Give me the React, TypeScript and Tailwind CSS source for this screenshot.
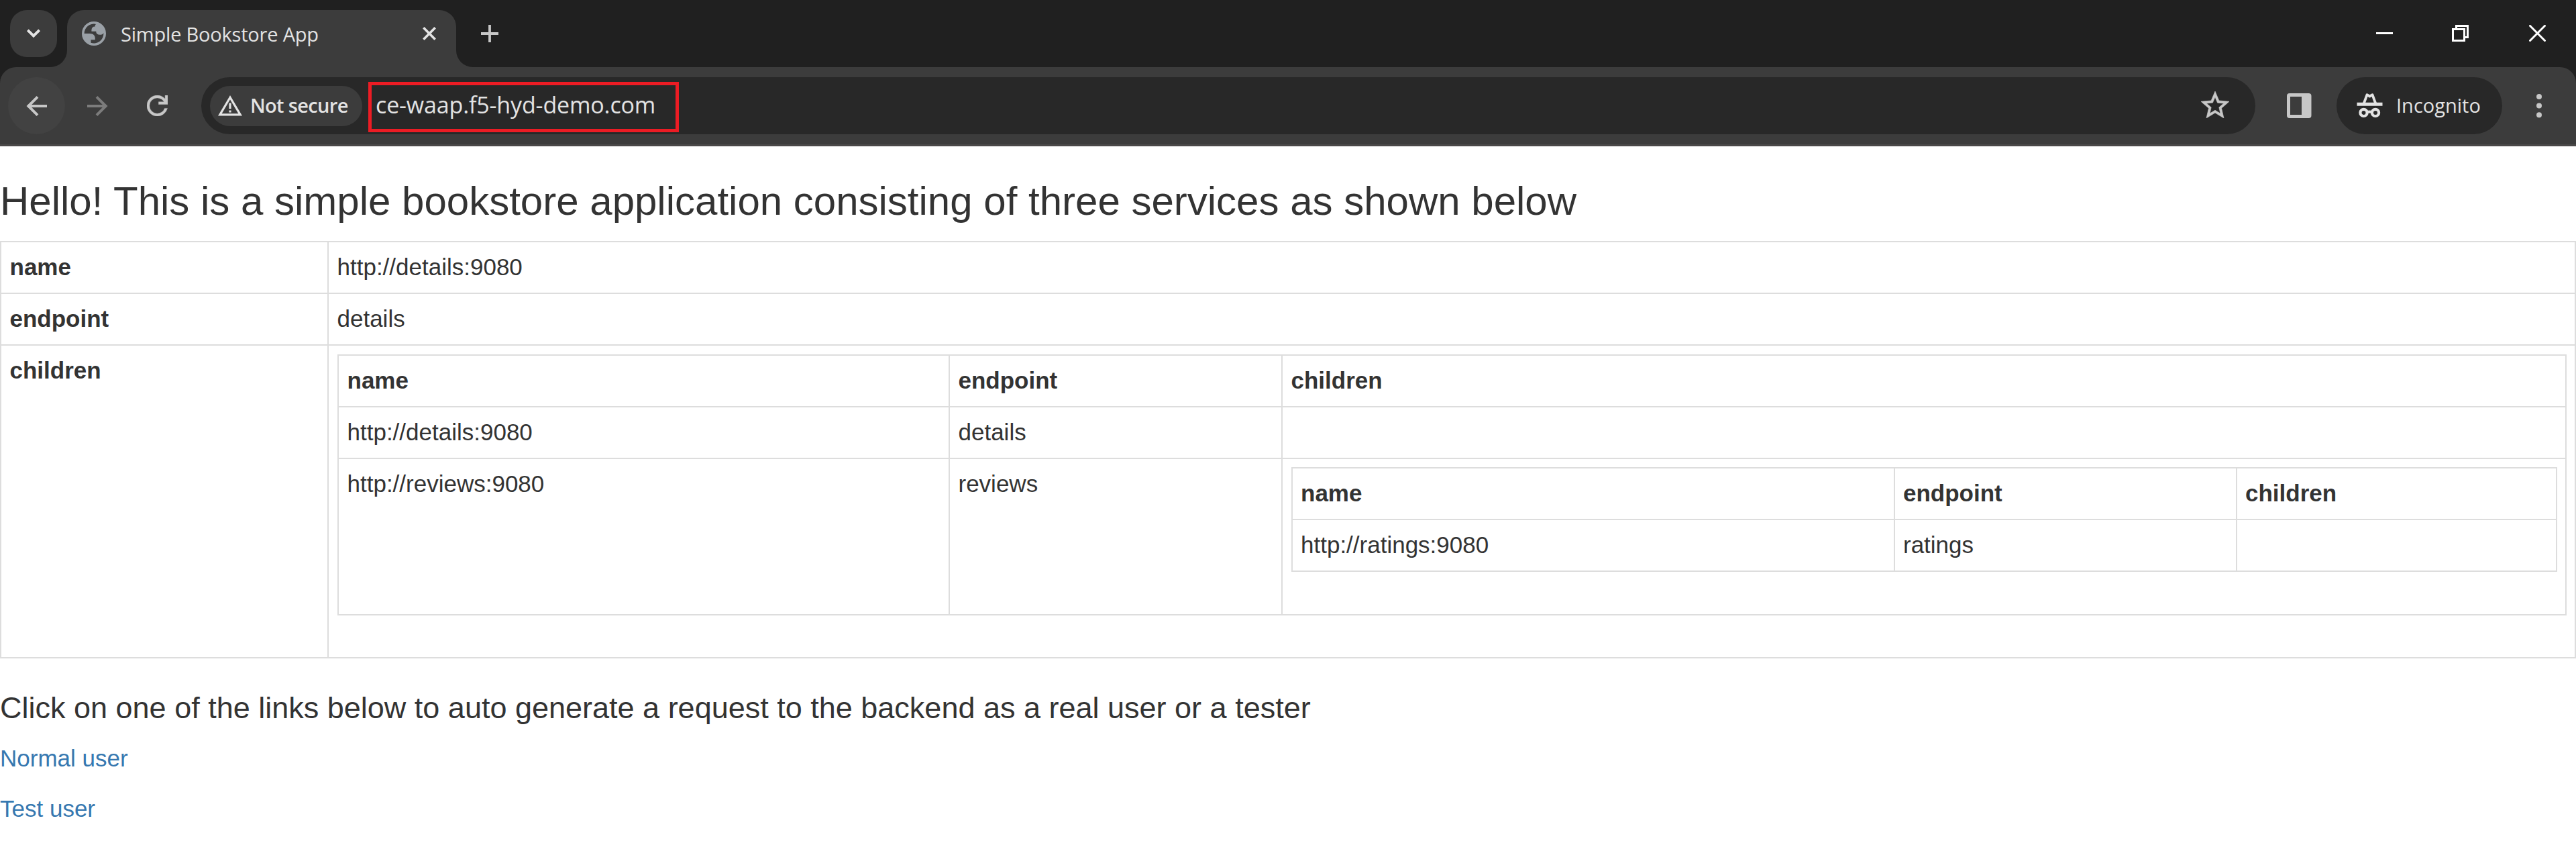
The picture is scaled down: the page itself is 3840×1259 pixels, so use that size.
import React from "react";

const th = "border-r-2 border-b-2 border-[#dddddd] pl-[12.5px] pt-[12px] align-top text-left font-bold";
const td = "border-r-2 border-b-2 border-[#dddddd] pl-[12.5px] pt-[12px] align-top text-left font-normal";
const table = "table-fixed border-separate border-spacing-0 border-l-2 border-t-2 border-[#dddddd]";

function RatingsTable() {
  return (
    <table className={`${table} w-[1887px]`}>
      <colgroup>
        <col className="w-[898px]" />
        <col className="w-[510px]" />
        <col />
      </colgroup>
      <tbody>
        <tr className="h-[77px]">
          <th className={th}>name</th>
          <th className={th}>endpoint</th>
          <th className={th}>children</th>
        </tr>
        <tr className="h-[77px]">
          <td className={td}>http://ratings:9080</td>
          <td className={td}>ratings</td>
          <td className={td}></td>
        </tr>
      </tbody>
    </table>
  );
}

function ServicesTable() {
  return (
    <table className={`${table} w-[3323px]`}>
      <colgroup>
        <col className="w-[911px]" />
        <col className="w-[496px]" />
        <col />
      </colgroup>
      <tbody>
        <tr className="h-[77px]">
          <th className={th}>name</th>
          <th className={th}>endpoint</th>
          <th className={th}>children</th>
        </tr>
        <tr className="h-[77px]">
          <td className={td}>http://details:9080</td>
          <td className={td}>details</td>
          <td className={td}></td>
        </tr>
        <tr className="h-[233px]">
          <td className={td}>http://reviews:9080</td>
          <td className={td}>reviews</td>
          <td className={td}>
            <RatingsTable />
          </td>
        </tr>
      </tbody>
    </table>
  );
}

function TabStrip() {
  return (
    <div className="flex h-[100px] items-start bg-[#202020] pl-[15px] pt-[15px]">
      <button className="flex size-[70px] items-center justify-center rounded-[25px] bg-[#3c3c3c]">
        <svg width="30" height="30" viewBox="0 0 30 30" fill="none" stroke="#e3e3e3" strokeWidth="4">
          <path d="M6.300 9.800 15 18.500l8.700-8.700" />
        </svg>
      </button>
      <div className="relative ml-[15px] flex h-[85px] w-[580px] items-start rounded-t-[25px] bg-[#3c3c3c]">
        <svg className="absolute bottom-0 -left-[25px]" width="25" height="25" viewBox="0 0 25 25">
          <path d="M25 0v25H0A25 25 0 0 0 25 0Z" fill="#3c3c3c" />
        </svg>
        <svg className="absolute -right-[25px] bottom-0" width="25" height="25" viewBox="0 0 25 25">
          <path d="M0 0v25h25A25 25 0 0 1 0 0Z" fill="#3c3c3c" />
        </svg>
        <svg className="ml-[22px] mt-[17px]" width="36" height="36" viewBox="2 2 20 20">
          <circle cx="12" cy="12" r="10" fill="#9aa0a6" />
          <path
            fill="#3c3c3c"
            d="M4 12h4.400c3.407.022 4.922 1.730 4.543 5.127H9.488v2.470a8.004 8.004 0 0 0 10.498-8.083C19.327 12.504 18.332 13 17 13c-2.137 0-3.206-.916-3.206-2.750h-3.748c-.274-2.728.683-4.092 2.870-4.092 0-.975.327-1.597.811-1.970A8.004 8.004 0 0 0 4 12z"
          />
        </svg>
        <span className="ml-[22px] mt-[16px] w-[400px] whitespace-nowrap text-[29px] leading-[40px] tracking-[-0.2px] text-[#e3e3e3] [font-family:'Open_Sans',sans-serif]">
          Simple Bookstore App
        </span>
        <svg className="ml-[50px] mt-[25px]" width="20" height="20" viewBox="0 0 20 20" stroke="#e3e3e3" strokeWidth="3.600">
          <path d="M1.300 1.300 18.700 18.700M18.700 1.300 1.300 18.700" />
        </svg>
      </div>
      <svg className="ml-[37px] mt-[22px]" width="26" height="26" viewBox="0 0 26 26" stroke="#c7c7c7" strokeWidth="3.800">
        <path d="M13 0v26M0 13h26" />
      </svg>
      <div className="ml-auto mr-[45px] mt-[22px] flex gap-[90px]">
        <svg width="25" height="25" viewBox="0 0 25 25" stroke="#fff" strokeWidth="3" className="-mr-[2px]">
          <path d="M0 12.500h25" />
        </svg>
        <svg width="25" height="25" viewBox="0 0 25 25" stroke="#fff" strokeWidth="3" fill="none">
          <path d="M1.500 6.500h17v17h-17ZM6.500 5V1.500h17v17H20" />
        </svg>
        <svg width="25" height="25" viewBox="0 0 25 25" stroke="#fff" strokeWidth="3">
          <path d="M.5.5l24 24M24.500.5l-24 24" />
        </svg>
      </div>
    </div>
  );
}

function Toolbar() {
  return (
    <div className="h-[118px] bg-[#202020]">
      <div className="flex h-[118px] items-start rounded-t-[24px] bg-[#3c3c3c] pt-[15px] shadow-[inset_0_-3px_0_#4a4848]">
        <div className="ml-[12px] flex size-[85px] items-center justify-center rounded-full bg-[#424242]">
          <svg width="32" height="32" viewBox="0 0 32 32" fill="none" stroke="#c7c7c7" strokeWidth="4">
            <path d="M31 16H3.500M17 2.300 3.300 16 17 29.700" />
          </svg>
        </div>
        <svg className="ml-[32px] mt-[27px]" width="32" height="32" viewBox="0 0 32 32" fill="none" stroke="#7c7c7c" strokeWidth="4">
          <path d="M1 16h27.500M15 2.300 28.700 16 15 29.700" />
        </svg>
        <svg className="ml-[58px] mt-[27px]" width="31" height="31" viewBox="160 -800 640 640" fill="#c7c7c7">
          <path
            stroke="#c7c7c7"
            strokeWidth="8"
            d="M480-160q-134 0-227-93t-93-227q0-134 93-227t227-93q69 0 132 28.500T720-690v-110h80v280H520v-80h168q-32-56-87.500-88T480-720q-100 0-170 70t-70 170q0 100 70 170t170 70q77 0 139-44t87-116h84q-28 106-114 173t-196 67Z"
          />
        </svg>

        <div className="ml-[50px] flex h-[85px] w-[3062px] items-center rounded-full bg-[#282828] pl-[13px]">
          <div className="flex h-[60px] w-[227px] items-center rounded-full bg-[#3c3c3c] pl-[12px]">
            <svg width="36" height="31" viewBox="0 0 36 31" fill="none" stroke="#e3e3e3" strokeWidth="3.200">
              <path d="M18 3.200 2.800 28.900h30.400Z" />
              <path d="M18 11.500v8.500M18 22.500v3" />
            </svg>
            <span className="mb-[2px] ml-[12px] whitespace-nowrap text-[29px] font-semibold leading-[40px] tracking-[-0.65px] text-[#e3e3e3] [font-family:'Open_Sans',sans-serif]">
              Not secure
            </span>
          </div>
          <div className="ml-[9px] mt-[4px] flex h-[75px] w-[463px] items-center border-[5px] border-[#ec1c24] pb-[7px] pl-[6px]">
            <span className="whitespace-nowrap text-[34px] leading-[46px] tracking-[-0.15px] text-[#e3e3e3] [font-family:'Open_Sans',sans-serif]">
              ce-waap.f5-hyd-demo.com
            </span>
          </div>
          <svg className="-mt-[3px] ml-auto mr-[39px]" width="42" height="40" viewBox="2 2 20 19" fill="#c7c7c7">
            <path
              stroke="#c7c7c7"
              strokeWidth=".3"
              d="M22 9.240l-7.190-.620L12 2 9.190 8.630 2 9.240l5.460 4.730L5.820 21 12 17.270 18.180 21l-1.630-7.030L22 9.240zM12 15.400l-3.760 2.270 1-4.280-3.320-2.880 4.380-.380L12 6.100l1.710 4.040 4.380.380-3.320 2.880 1 4.280L12 15.400z"
            />
          </svg>
        </div>

        <svg className="ml-[47px] mt-[24px]" width="37" height="37" viewBox="0 0 37 37">
          <rect width="36.500" height="37" rx="4" fill="#c7c7c7" />
          <path d="M5 5h17v27H5Z" fill="#3c3c3c" />
        </svg>
        <div className="ml-[37px] flex h-[85px] w-[247px] items-center rounded-full bg-[#282828] pl-[30px]">
          <svg width="39" height="37" viewBox="0 0 39 37" fill="none" stroke="#e3e3e3">
            <path d="M10.800 15 15.500 2.200l4 2.300 4-2.300L28.200 15" strokeWidth="3.800" strokeLinejoin="round" />
            <path d="M.5 16.200h38" strokeWidth="5" />
            <circle cx="10.500" cy="28.900" r="5.100" strokeWidth="4.200" />
            <circle cx="28" cy="28.900" r="5.100" strokeWidth="4.200" />
            <path d="M15 28.500q4.250-2 8.500 0" strokeWidth="4" />
          </svg>
          <span className="mb-[2px] ml-[20px] whitespace-nowrap text-[29px] leading-[40px] text-[#e3e3e3] [font-family:'Open_Sans',sans-serif]">
            Incognito
          </span>
        </div>
        <svg className="ml-[50px] mt-[23px]" width="10" height="39" viewBox="0 0 10 39" fill="#c7c7c7">
          <circle cx="5" cy="6" r="4" />
          <circle cx="5" cy="19.500" r="4" />
          <circle cx="5" cy="33.300" r="4" />
        </svg>
      </div>
    </div>
  );
}

export default function App() {
  return (
    <div className="flex h-[1259px] w-[3840px] flex-col overflow-hidden bg-white text-[35px] leading-[50px] text-[#333333] [font-family:'Liberation_Sans',Arial,sans-serif]">
      <TabStrip />
      <Toolbar />
      <main className="flex flex-col pt-[49px]">
        <h3 className="mb-[26px] text-[60px] leading-[66px]">
          Hello! This is a simple bookstore application consisting of three services as shown below
        </h3>
        <table className={`${table} w-[3840px]`}>
          <colgroup>
            <col className="w-[488px]" />
            <col />
          </colgroup>
          <tbody>
            <tr className="h-[77px]">
              <th className={th}>name</th>
              <td className={td}>http://details:9080</td>
            </tr>
            <tr className="h-[77px]">
              <th className={th}>endpoint</th>
              <td className={td}>details</td>
            </tr>
            <tr className="h-[466px]">
              <th className={th}>children</th>
              <td className="border-r-2 border-b-2 border-[#dddddd] pl-[13px] pt-[13px] align-top text-left">
                <ServicesTable />
              </td>
            </tr>
          </tbody>
        </table>
        <h4 className="mt-[49px] text-[45px] leading-[50px]">
          Click on one of the links below to auto generate a request to the backend as a real user or a tester
        </h4>
        <a className="mt-[25px] text-[#3678b0]">Normal user</a>
        <a className="mt-[25px] text-[#3678b0]">Test user</a>
      </main>
    </div>
  );
}
